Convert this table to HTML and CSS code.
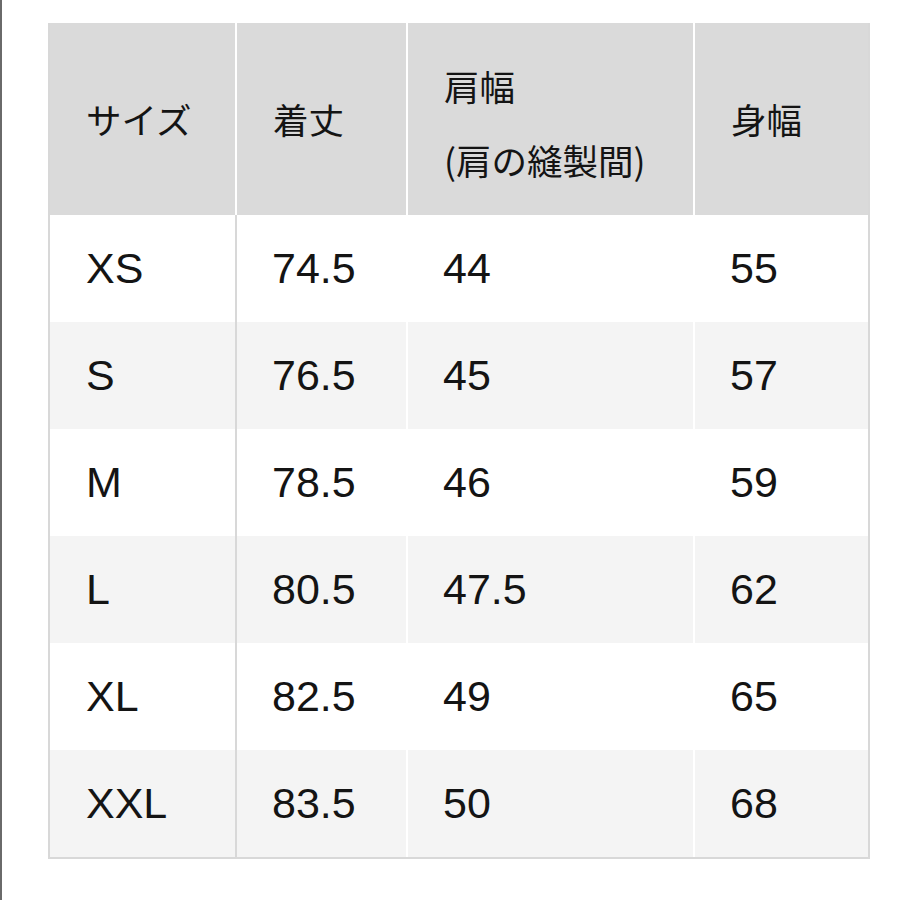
FILE: index.html
```html
<!DOCTYPE html>
<html lang="ja">
<head>
<meta charset="utf-8">
<link rel="stylesheet" href="styles.css">
</head>
<body>
<div class="page">
  <table class="size-table">
    <thead>
      <tr>
        <th class="c1">サイズ</th>
        <th class="c2">着丈</th>
        <th class="c3">肩幅<br>(肩の縫製間)</th>
        <th class="c4">身幅</th>
      </tr>
    </thead>
    <tbody>
      <tr><td>XS</td><td>74.5</td><td>44</td><td>55</td></tr>
      <tr class="alt"><td>S</td><td>76.5</td><td>45</td><td>57</td></tr>
      <tr><td>M</td><td>78.5</td><td>46</td><td>59</td></tr>
      <tr class="alt"><td>L</td><td>80.5</td><td>47.5</td><td>62</td></tr>
      <tr><td>XL</td><td>82.5</td><td>49</td><td>65</td></tr>
      <tr class="alt"><td>XXL</td><td>83.5</td><td>50</td><td>68</td></tr>
    </tbody>
  </table>
</div>
</body>
</html>
```

FILE: styles.css
```css
html, body {
  margin: 0;
  padding: 0;
  background: #ffffff;
}

.page {
  box-sizing: border-box;
  min-height: 900px;
  border-left: 2px solid #6a6a6a;
  padding: 23px 0 0 46px;
  font-family: "Liberation Sans", "Noto Sans CJK JP", sans-serif;
  color: #141414;
}

.size-table {
  border-collapse: separate;
  border-spacing: 0;
  border-left: 2px solid #d8d8d8;
  border-right: 2px solid #d8d8d8;
  border-bottom: 2px solid #d8d8d8;
  table-layout: fixed;
  width: 822px;
}

.size-table th {
  background: #dadada;
  font-family: "Noto Sans CJK JP", "Liberation Sans", sans-serif;
  font-weight: 400;
  font-size: 35.5px;
  line-height: 74px;
  text-align: left;
  height: 192px;
  padding: 0 0 0 36px;
  box-sizing: border-box;
  vertical-align: middle;
}

.size-table th.c3 {
  padding-top: 8px;
}

.size-table th + th {
  border-left: 2px solid #ffffff;
}

.size-table .c1 { width: 185px; }
.size-table .c2 { width: 171px; }
.size-table .c3 { width: 287px; }
.size-table .c4 { width: 175px; }

.size-table td {
  height: 107px;
  padding: 0 0 0 36px;
  box-sizing: border-box;
  font-size: 43px;
  vertical-align: middle;
  line-height: 1;
}

.size-table td + td {
  border-left: 2px solid #ffffff;
  padding-left: 35px;
}

.size-table td:nth-child(2) {
  border-left: 2px solid #d8d8d8;
}

.size-table tr.alt td {
  background: #f4f4f4;
}
```
